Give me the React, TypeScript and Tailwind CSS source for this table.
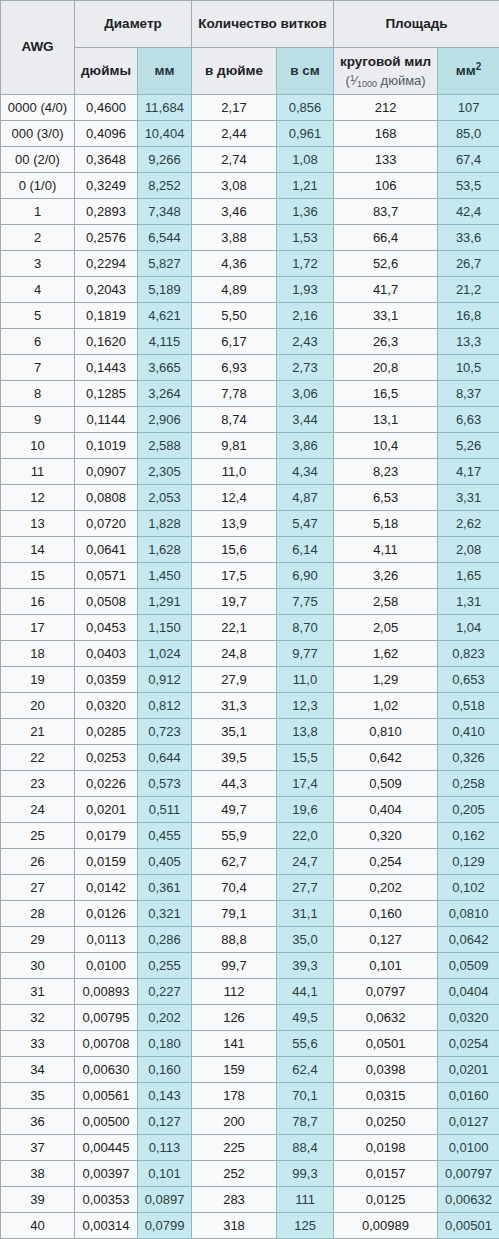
import React from 'react';

const rows: string[][] = [
  ['0000 (4/0)', '0,4600', '11,684', '2,17', '0,856', '212', '107'],
  ['000 (3/0)', '0,4096', '10,404', '2,44', '0,961', '168', '85,0'],
  ['00 (2/0)', '0,3648', '9,266', '2,74', '1,08', '133', '67,4'],
  ['0 (1/0)', '0,3249', '8,252', '3,08', '1,21', '106', '53,5'],
  ['1', '0,2893', '7,348', '3,46', '1,36', '83,7', '42,4'],
  ['2', '0,2576', '6,544', '3,88', '1,53', '66,4', '33,6'],
  ['3', '0,2294', '5,827', '4,36', '1,72', '52,6', '26,7'],
  ['4', '0,2043', '5,189', '4,89', '1,93', '41,7', '21,2'],
  ['5', '0,1819', '4,621', '5,50', '2,16', '33,1', '16,8'],
  ['6', '0,1620', '4,115', '6,17', '2,43', '26,3', '13,3'],
  ['7', '0,1443', '3,665', '6,93', '2,73', '20,8', '10,5'],
  ['8', '0,1285', '3,264', '7,78', '3,06', '16,5', '8,37'],
  ['9', '0,1144', '2,906', '8,74', '3,44', '13,1', '6,63'],
  ['10', '0,1019', '2,588', '9,81', '3,86', '10,4', '5,26'],
  ['11', '0,0907', '2,305', '11,0', '4,34', '8,23', '4,17'],
  ['12', '0,0808', '2,053', '12,4', '4,87', '6,53', '3,31'],
  ['13', '0,0720', '1,828', '13,9', '5,47', '5,18', '2,62'],
  ['14', '0,0641', '1,628', '15,6', '6,14', '4,11', '2,08'],
  ['15', '0,0571', '1,450', '17,5', '6,90', '3,26', '1,65'],
  ['16', '0,0508', '1,291', '19,7', '7,75', '2,58', '1,31'],
  ['17', '0,0453', '1,150', '22,1', '8,70', '2,05', '1,04'],
  ['18', '0,0403', '1,024', '24,8', '9,77', '1,62', '0,823'],
  ['19', '0,0359', '0,912', '27,9', '11,0', '1,29', '0,653'],
  ['20', '0,0320', '0,812', '31,3', '12,3', '1,02', '0,518'],
  ['21', '0,0285', '0,723', '35,1', '13,8', '0,810', '0,410'],
  ['22', '0,0253', '0,644', '39,5', '15,5', '0,642', '0,326'],
  ['23', '0,0226', '0,573', '44,3', '17,4', '0,509', '0,258'],
  ['24', '0,0201', '0,511', '49,7', '19,6', '0,404', '0,205'],
  ['25', '0,0179', '0,455', '55,9', '22,0', '0,320', '0,162'],
  ['26', '0,0159', '0,405', '62,7', '24,7', '0,254', '0,129'],
  ['27', '0,0142', '0,361', '70,4', '27,7', '0,202', '0,102'],
  ['28', '0,0126', '0,321', '79,1', '31,1', '0,160', '0,0810'],
  ['29', '0,0113', '0,286', '88,8', '35,0', '0,127', '0,0642'],
  ['30', '0,0100', '0,255', '99,7', '39,3', '0,101', '0,0509'],
  ['31', '0,00893', '0,227', '112', '44,1', '0,0797', '0,0404'],
  ['32', '0,00795', '0,202', '126', '49,5', '0,0632', '0,0320'],
  ['33', '0,00708', '0,180', '141', '55,6', '0,0501', '0,0254'],
  ['34', '0,00630', '0,160', '159', '62,4', '0,0398', '0,0201'],
  ['35', '0,00561', '0,143', '178', '70,1', '0,0315', '0,0160'],
  ['36', '0,00500', '0,127', '200', '78,7', '0,0250', '0,0127'],
  ['37', '0,00445', '0,113', '225', '88,4', '0,0198', '0,0100'],
  ['38', '0,00397', '0,101', '252', '99,3', '0,0157', '0,00797'],
  ['39', '0,00353', '0,0897', '283', '111', '0,0125', '0,00632'],
  ['40', '0,00314', '0,0799', '318', '125', '0,00989', '0,00501'],
];

// columns 2, 4, 6 are the metric ones (highlighted)
const metric = [false, false, true, false, true, false, true];
// the cell right before a metric column gets a teal right edge
const beforeMetric = [false, true, false, true, false, true, false];

const th = 'border-r border-b border-[#a2a9b1] bg-[#eaecf0] font-bold text-[13.5px] text-[#202122] text-center align-middle px-1';
const thMetric = 'border-r border-b border-[#8fb7bd] bg-[#bae0e6] font-bold text-[13.5px] text-[#1f3438] text-center align-middle px-1';

export default function App() {
  return (
    <div className="w-[499px] bg-white" style={{ fontFamily: '"Liberation Sans", Arial, sans-serif' }}>
      <table className="w-[499px] table-fixed border-separate border-spacing-0 border-l border-t border-[#a2a9b1]">
        <colgroup>
          <col className="w-[74px]" />
          <col className="w-[63px]" />
          <col className="w-[54px]" />
          <col className="w-[85px]" />
          <col className="w-[57px]" />
          <col className="w-[104px]" />
          <col className="w-[62px]" />
        </colgroup>
        <thead>
          <tr className="h-[47px]">
            <th rowSpan={2} className={th}>AWG</th>
            <th colSpan={2} className={th}>Диаметр</th>
            <th colSpan={2} className={th + ' whitespace-nowrap px-0'}>Количество витков</th>
            <th colSpan={2} className={th}>Площадь</th>
          </tr>
          <tr className="h-[47px]">
            <th className={th + ' border-r-[#8fb7bd]'}>дюймы</th>
            <th className={thMetric}>мм</th>
            <th className={th + ' border-r-[#8fb7bd]'}>в дюйме</th>
            <th className={thMetric}>в см</th>
            <th className={th + ' border-r-[#8fb7bd] px-0 leading-[19px]'}>
              <div className="whitespace-nowrap">круговой мил</div>
              <div className="font-normal text-[13px] text-[#54595d] whitespace-nowrap">
                (<sup className="text-[9px]">1</sup>⁄<sub className="text-[9px]">1000</sub> дюйма)
              </div>
            </th>
            <th className={thMetric}>
              мм<sup className="text-[10px]">2</sup>
            </th>
          </tr>
        </thead>
        <tbody>
          {rows.map((r, i) => (
            <tr key={i} className="h-[26px]">
              {r.map((v, j) => (
                <td
                  key={j}
                  className={
                    'border-b border-r text-center align-middle text-[13px] px-1 whitespace-nowrap ' +
                    (metric[j]
                      ? 'bg-[#c5e9ef] border-[#8fb7bd] text-[#2c3e41]'
                      : beforeMetric[j]
                        ? 'bg-[#f8f9fa] border-[#a2a9b1] border-r-[#8fb7bd] text-[#202122]'
                        : 'bg-[#f8f9fa] border-[#a2a9b1] text-[#202122]')
                  }
                >
                  {v}
                </td>
              ))}
            </tr>
          ))}
        </tbody>
      </table>
    </div>
  );
}
